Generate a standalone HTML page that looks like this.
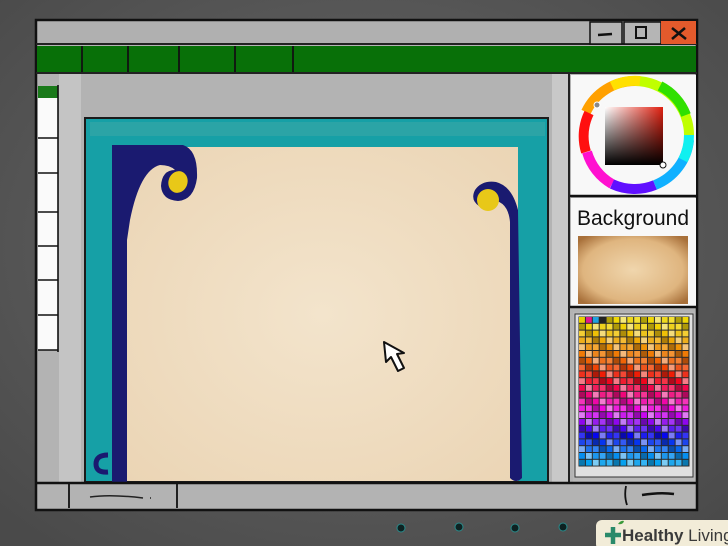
<!DOCTYPE html>
<html><head><meta charset="utf-8"><style>
html,body{margin:0;padding:0;background:#595959;width:728px;height:546px;overflow:hidden;font-family:"Liberation Sans",sans-serif}
</style></head><body>
<svg width="728" height="546" viewBox="0 0 728 546" xmlns="http://www.w3.org/2000/svg">
<defs>
<radialGradient id="bg" cx="50%" cy="45%" r="70%"><stop offset="0" stop-color="#6a6a6a"/><stop offset="1" stop-color="#4a4a4a"/></radialGradient>
<radialGradient id="paper" cx="50%" cy="50%" r="70%"><stop offset="0" stop-color="#f3e4cc"/><stop offset="1" stop-color="#ebd5b5"/></radialGradient>
<radialGradient id="tex" cx="50%" cy="50%" r="65%"><stop offset="0" stop-color="#f0d6ad"/><stop offset="0.7" stop-color="#dfb57f"/><stop offset="1" stop-color="#a8703a"/></radialGradient>
<linearGradient id="sq1" x1="0" y1="0" x2="1" y2="0"><stop offset="0" stop-color="#fff"/><stop offset="1" stop-color="#e02010"/></linearGradient>
<linearGradient id="sq2" x1="0" y1="0" x2="0" y2="1"><stop offset="0" stop-color="#000" stop-opacity="0"/><stop offset="1" stop-color="#000"/></linearGradient>
</defs>
<rect width="728" height="546" fill="url(#bg)"/>
<rect x="36" y="20" width="661" height="490" fill="#b3b3b3" stroke="#111" stroke-width="2.5"/>
<rect x="38" y="22" width="552" height="21" fill="#b0b0b0"/>
<line x1="36" y1="44" x2="697" y2="44" stroke="#222" stroke-width="2"/>
<rect x="590" y="22" width="32" height="22" fill="#b5b5b5" stroke="#111" stroke-width="1.5"/>
<rect x="624" y="22" width="37" height="22" fill="#b5b5b5" stroke="#111" stroke-width="1.5"/>
<rect x="661" y="21" width="35" height="23" fill="#e35a2c"/>
<line x1="598" y1="35" x2="612" y2="34" stroke="#111" stroke-width="2.5"/>
<rect x="636" y="27" width="10" height="11" fill="none" stroke="#111" stroke-width="2"/>
<path d="M672 28 L686 39 M685 28 L672 39" stroke="#111" stroke-width="2.5" fill="none"/>
<rect x="37" y="46" width="659" height="26" fill="#087008"/>
<path d="M82 46V72 M128 46V72 M179 46V72 M235 46V72 M293 46V72" stroke="#111" stroke-width="1.8"/>
<line x1="36" y1="73" x2="697" y2="73" stroke="#222" stroke-width="2"/>
<rect x="38" y="86" width="20" height="12" fill="#1a7a1a"/>
<rect x="38" y="98" width="20" height="252" fill="#fafafa"/>
<path d="M58 85V352 M38 138H58 M38 173H58 M38 212H58 M38 246H58 M38 280H58 M38 315H58 M38 350H58" stroke="#111" stroke-width="1.6" fill="none"/>
<rect x="59" y="74" width="22" height="408" fill="#c4c4c4"/>
<rect x="552" y="74" width="16" height="408" fill="#c8c8c8"/>
<line x1="569" y1="74" x2="569" y2="482" stroke="#222" stroke-width="2"/>
<rect x="84" y="117" width="465" height="365" fill="#1b1b1b"/>
<rect x="86" y="119" width="461" height="362" fill="#16a0a6"/>
<rect x="90" y="122" width="455" height="14" fill="#3aa6a6" opacity="0.6"/>
<rect x="126" y="147" width="392" height="334" fill="url(#paper)"/>
<path d="M112 145 L183 145 Q198 150 197 178 Q194 200 178 201 Q162 200 161 186 Q162 170 175 170 Q170 165 160 165 Q140 170 130 220 L127 240 L127 482 L112 482 Z" fill="#1a1a70"/>
<ellipse cx="178" cy="182" rx="9.5" ry="11" fill="#e8c818" transform="rotate(20 178 182)"/>
<path d="M108 455 Q96 455 96 464 Q96 473 108 472" stroke="#1a1a70" stroke-width="5" fill="none"/>
<path d="M510 478 L510 222 Q508 200 490 200 Q484 210 479 206 Q470 200 475 190 Q482 180 496 182 Q512 186 518 210 L522 478 Q516 484 510 478Z" fill="#1a1a70"/>
<circle cx="488" cy="200" r="11" fill="#e8c818"/>
<path d="M384 342 L386 362 L391 357 L398 371 L404 368 L397 354 L404 353 Z" fill="#fff" stroke="#111" stroke-width="2" stroke-linejoin="round"/>
<rect x="571" y="75" width="125" height="121" fill="#f8f8f8"/>
<line x1="570" y1="196" x2="697" y2="196" stroke="#111" stroke-width="2.5"/>
<g>
<path d="M635 81 A54 54 0 0 1 689 135" stroke="#c0ff00" stroke-width="10" fill="none"/>
<path d="M635 81 A54 54 0 0 0 586 112" stroke="#ffa000" stroke-width="10" fill="none"/>
<path d="M660 86 A54 54 0 0 1 686 115" stroke="#30e000" stroke-width="10" fill="none"/>
<path d="M612 86 A54 54 0 0 1 640 81" stroke="#ffe000" stroke-width="10" fill="none"/>
<path d="M589 113 A54 54 0 0 0 586 152" stroke="#ff1010" stroke-width="10" fill="none"/>
<path d="M587 152 A54 54 0 0 0 612 184" stroke="#ff10d0" stroke-width="10" fill="none"/>
<path d="M612 184 A54 54 0 0 0 655 185" stroke="#6010ff" stroke-width="10" fill="none"/>
<path d="M655 185 A54 54 0 0 0 689 140" stroke="#10b0ff" stroke-width="10" fill="none"/>
<path d="M683 160 A54 54 0 0 0 689 135" stroke="#10f0f0" stroke-width="10" fill="none"/>
</g>
<rect x="605" y="107" width="58" height="58" fill="url(#sq1)"/>
<rect x="605" y="107" width="58" height="58" fill="url(#sq2)"/>
<circle cx="597" cy="105" r="3" fill="#888" stroke="#fff"/>
<circle cx="663" cy="165" r="3" fill="#fff" stroke="#111"/>
<rect x="571" y="198" width="125" height="108" fill="#f8f8f8"/>
<text x="577" y="225" font-size="21" fill="#111" font-family="Liberation Sans, sans-serif" textLength="112" lengthAdjust="spacingAndGlyphs">Background</text>
<rect x="578" y="236" width="110" height="68" fill="url(#tex)"/>
<line x1="570" y1="307" x2="697" y2="307" stroke="#111" stroke-width="2.5"/>
<rect x="573" y="312" width="122" height="170" fill="#b8b8b8"/>
<rect x="575" y="314" width="118" height="163" fill="#e0e0e0" stroke="#333" stroke-width="1"/>
<rect x="578.5" y="316.5" width="111" height="150" fill="#2a2a2a"/>
<g id="pal"></g>
<line x1="36" y1="483" x2="697" y2="483" stroke="#111" stroke-width="2.5"/>
<path d="M69 484V508 M177 484V508 M626 486Q624 496 627 505" stroke="#111" stroke-width="1.8" fill="none"/>
<path d="M90 497 Q110 494 143 498 M150 498h1" stroke="#222" stroke-width="1.5" fill="none"/>
<path d="M642 495 Q660 492 674 494" stroke="#111" stroke-width="2.5" fill="none"/>
<g fill="#0d2222" stroke="#2a8a8a" stroke-width="1">
<circle cx="401" cy="528" r="4"/><circle cx="459" cy="527" r="4"/><circle cx="515" cy="528" r="4"/><circle cx="563" cy="527" r="4"/></g>
<rect x="596" y="520" width="140" height="30" rx="6" fill="#f2ecd8"/>
<path d="M605 535h16 M613 527v17" stroke="#2a8a6a" stroke-width="4.5"/>
<path d="M618 524 q3 -4 6 -3 q-1 4 -6 3" fill="#3a9a3a"/>
<text x="622" y="541" font-size="17" fill="#3a3a3a" font-family="Liberation Sans, sans-serif" font-weight="bold">Healthy <tspan font-weight="normal">Living</tspan></text>
</svg>
<script>
(function(){var g=document.getElementById('pal'),ns='http://www.w3.org/2000/svg';
var hues=[54,52,48,42,36,30,24,16,6,354,342,330,318,305,290,275,258,240,228,215,205,200];
var cols=16,rows=22,cw=6.9,ch=6.8,x0=579,y0=317;
for(var r=0;r<rows;r++)for(var c=0;c<cols;c++){var h=hues[r];var v=(c*7+r*3)%5;var l=[48,58,72,36,52][v],s=[95,90,85,90,85][v];
var cc;if(r==0&&c<4){cc=['#e8d000','#e0188a','#20a0e0','#222'][c];}else cc='hsl('+h+','+s+'%,'+l+'%)';
var e=document.createElementNS(ns,'rect');e.setAttribute('x',x0+c*cw);e.setAttribute('y',y0+r*ch);e.setAttribute('width',cw-1);e.setAttribute('height',ch-1);e.setAttribute('fill',cc);g.appendChild(e);}
})();
</script>
</body></html>
